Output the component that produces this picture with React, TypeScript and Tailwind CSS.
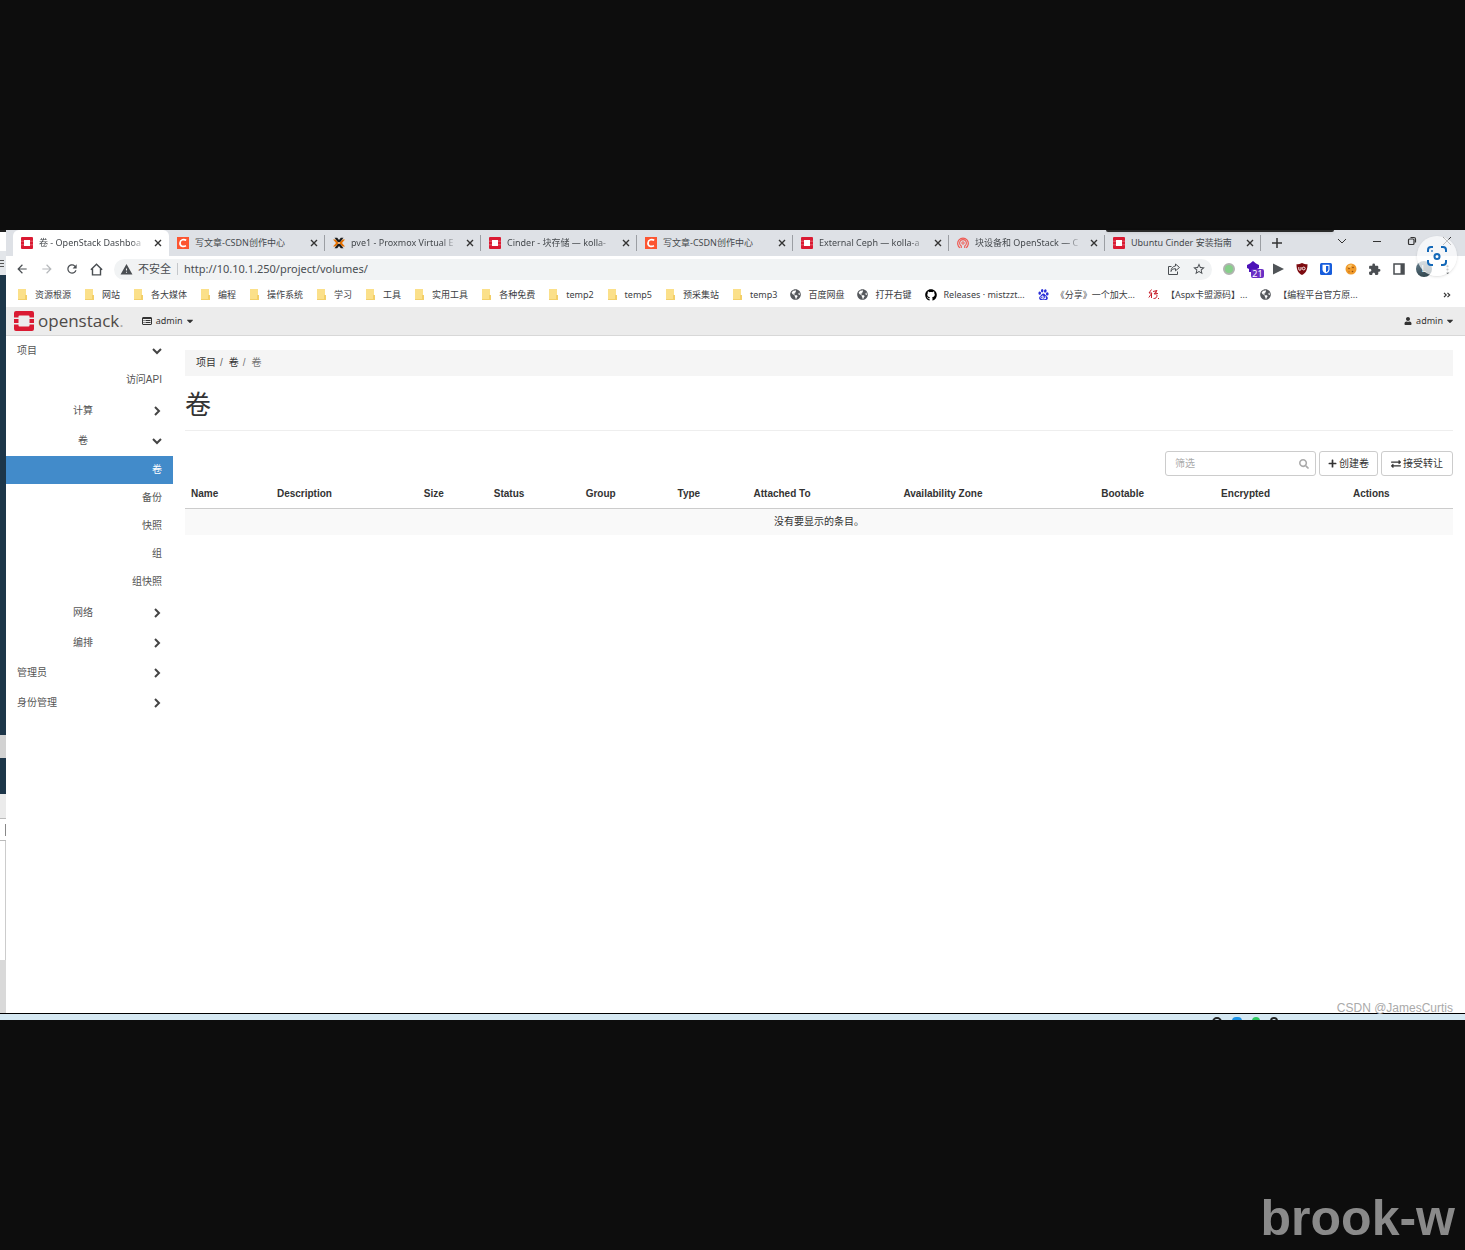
import React from "react";
import {
  MdArrowBack,
  MdArrowForward,
  MdExtension,
  MdMoreVert,
  MdRefresh,
  MdStarBorder,
  MdWarning,
} from "react-icons/md";
import {
  FaCaretDown,
  FaExchangeAlt,
  FaGithub,
  FaGlobeAmericas,
  FaPlus,
  FaSearch,
  FaUser,
} from "react-icons/fa";
import { SiBaidu } from "react-icons/si";

type IconKind = "openstack" | "csdn" | "proxmox" | "ceph";
type BookmarkKind = "folder" | "globe" | "github" | "baidu" | "red";

const tabs: { icon: IconKind; title: string; active?: boolean; long?: boolean }[] = [
  { icon: "openstack", title: "卷 - OpenStack Dashboa", active: true, long: true },
  { icon: "csdn", title: "写文章-CSDN创作中心" },
  { icon: "proxmox", title: "pve1 - Proxmox Virtual E", long: true },
  { icon: "openstack", title: "Cinder - 块存储 — kolla-", long: true },
  { icon: "csdn", title: "写文章-CSDN创作中心" },
  { icon: "openstack", title: "External Ceph — kolla-a", long: true },
  { icon: "ceph", title: "块设备和 OpenStack — C", long: true },
  { icon: "openstack", title: "Ubuntu Cinder 安装指南" },
];

const bookmarks: { kind: BookmarkKind; label: string }[] = [
  { kind: "folder", label: "资源根源" },
  { kind: "folder", label: "网站" },
  { kind: "folder", label: "各大媒体" },
  { kind: "folder", label: "编程" },
  { kind: "folder", label: "操作系统" },
  { kind: "folder", label: "学习" },
  { kind: "folder", label: "工具" },
  { kind: "folder", label: "实用工具" },
  { kind: "folder", label: "各种免费" },
  { kind: "folder", label: "temp2" },
  { kind: "folder", label: "temp5" },
  { kind: "folder", label: "预采集站" },
  { kind: "folder", label: "temp3" },
  { kind: "globe", label: "百度网盘" },
  { kind: "globe", label: "打开右键" },
  { kind: "github", label: "Releases · mistzzt..." },
  { kind: "baidu", label: "《分享》一个加大..." },
  { kind: "red", label: "【Aspx卡盟源码】..." },
  { kind: "globe", label: "【编程平台官方原..." },
];

const columns = [
  { label: "Name", width: "w-[86px]" },
  { label: "Description", width: "w-[147px]" },
  { label: "Size", width: "w-[70px]" },
  { label: "Status", width: "w-[92px]" },
  { label: "Group", width: "w-[92px]" },
  { label: "Type", width: "w-[76px]" },
  { label: "Attached To", width: "w-[150px]" },
  { label: "Availability Zone", width: "w-[198px]" },
  { label: "Bootable", width: "w-[120px]" },
  { label: "Encrypted", width: "w-[132px]" },
  { label: "Actions", width: "w-[106px]" },
];

function OpenStackMark({ className }: { className: string }) {
  return (
    <svg viewBox="0 0 20 20" className={className} aria-hidden="true">
      <path
        fill="#da1a32"
        d="M2 0h16a2 2 0 0 1 2 2v4.500h-4.500V5.500a1 1 0 0 0-1-1h-9a1 1 0 0 0-1 1v1H0V2a2 2 0 0 1 2-2ZM0 8h4.500v4H0ZM15.500 8H20v4h-4.500ZM0 13.500h4.500v1a1 1 0 0 0 1 1h9a1 1 0 0 0 1-1v-1H20V18a2 2 0 0 1-2 2H2a2 2 0 0 1-2-2Z"
      />
    </svg>
  );
}

function TabIcon({ kind }: { kind: IconKind }) {
  if (kind === "openstack") {
    return (
      <svg viewBox="0 0 12 12" className="size-3 shrink-0" aria-hidden="true">
        <rect width="12" height="12" rx="1" fill="#da1a32" />
        <rect x="3" y="3" width="6" height="6" fill="#fff" />
        <path stroke="#fff" strokeWidth=".5" opacity=".6" d="M0 4.200h3M0 7.800h3M9 4.200h3M9 7.800h3" />
      </svg>
    );
  }
  if (kind === "csdn") {
    return (
      <svg viewBox="0 0 12 12" className="size-3 shrink-0" aria-hidden="true">
        <rect width="12" height="12" fill="#fc5531" />
        <path fill="none" stroke="#fff" strokeWidth="1.700" d="M9.200 3.300C7 2 3.200 2.400 3 6S6.500 10 9 8.800" />
      </svg>
    );
  }
  if (kind === "proxmox") {
    return (
      <svg viewBox="0 0 12 12" className="size-3 shrink-0" aria-hidden="true">
        <path fill="#e57000" d="M0 2.500h2.500L6 6 2.500 9.500H0L3 6ZM12 2.500H9.500L6 6l3.500 3.500H12L9 6Z" />
        <path fill="#1b1b1b" d="M1.500.800h2.700L6 3 7.800.800h2.700L7.200 5h-2.400ZM1.500 11.200h2.700L6 9l1.800 2.200h2.700L7.200 7h-2.400Z" />
      </svg>
    );
  }
  return (
    <svg viewBox="0 0 12 12" className="size-3 shrink-0" fill="none" stroke="#ef5c55" aria-hidden="true">
      <path strokeWidth="1.200" d="M3 10.800A5.300 5.300 0 1 1 9 10.800" />
      <path strokeWidth="1.100" d="M4.300 11V9A3.400 3.400 0 1 1 7.700 9v2" />
      <circle cx="6" cy="6" r="1.200" strokeWidth="1" />
    </svg>
  );
}

function BookmarkIcon({ kind }: { kind: BookmarkKind }) {
  if (kind === "globe") return <FaGlobeAmericas className="size-[11px] shrink-0 text-[#55585c]" />;
  if (kind === "github") return <FaGithub className="size-3 shrink-0 text-black" />;
  if (kind === "baidu") return <SiBaidu className="size-[11px] shrink-0 text-[#2a2fd8]" />;
  if (kind === "red") {
    return (
      <svg viewBox="0 0 11 11" className="size-[11px] shrink-0" fill="none" stroke="#c8202c" aria-hidden="true">
        <path d="M3.500.500 1 4h3L.800 8.500M3.500 5v4M5 2.500l4-1L6 5l4-.500M8 2v3.500M9 6c0 3-1.500 3.500-3.500 3.500M10 9.500h1" />
      </svg>
    );
  }
  return (
    <svg viewBox="0 0 11 11" className="size-[11px] shrink-0" aria-hidden="true">
      <path fill="#fbe08a" d="M1 0h8v11H1z" />
      <path fill="#f3cf68" d="M8 6h2v5H1v-1h7z" />
    </svg>
  );
}

function BackgroundStrip() {
  return (
    <div className="flex w-1.5 shrink-0 flex-col overflow-hidden bg-white" aria-hidden="true">
      <div className="h-[21px] shrink-0 border-t-2 border-[#222]" />
      <div className="flex h-6 shrink-0 flex-col justify-center gap-0.5 bg-[#e3e6ea] pr-0.5">
        <div className="h-px bg-[#555]" />
        <div className="h-px bg-[#555]" />
        <div className="h-px bg-[#555]" />
      </div>
      <div className="h-[460px] shrink-0 bg-[#1d3649]" />
      <div className="h-[23px] shrink-0 bg-[#d2d2d2]" />
      <div className="h-9 shrink-0 bg-[#1d3649]" />
      <div className="h-[25px] shrink-0 border-b border-[#bbb] bg-[#ebebeb]" />
      <div className="flex h-[22px] shrink-0 items-center justify-end border-b border-[#bbb]">
        <div className="h-3 w-px bg-[#888]" />
      </div>
      <div className="h-[119px] shrink-0 border-r border-[#ccc]" />
      <div className="flex-1 bg-[#d9d9d9]" />
    </div>
  );
}

function TabStrip() {
  return (
    <div className="relative flex h-[26px] bg-[#dee1e6] pl-[7px] text-[#45494d]">
      {tabs.map((tab, i) => (
        <div
          key={i}
          className={
            tab.active
              ? "flex max-w-[156px] min-w-0 flex-1 items-center rounded-t-md bg-white pl-2"
              : "flex max-w-[156px] min-w-0 flex-1 items-center pl-2"
          }
        >
          <TabIcon kind={tab.icon} />
          <a
            href="#"
            className={
              tab.long
                ? "ml-1.5 min-w-0 flex-1 overflow-hidden mask-r-from-85% text-[9px] leading-4 whitespace-nowrap"
                : "ml-1.5 min-w-0 flex-1 overflow-hidden text-[9px] leading-4 whitespace-nowrap"
            }
          >
            {tab.title}
          </a>
          <button aria-label="关闭标签页" className="ml-1.5 flex h-4 w-3 items-center justify-center">
            <svg viewBox="0 0 8 8" className="size-2" stroke="#333" strokeWidth="1.400" aria-hidden="true">
              <path d="m1 1 6 6M7 1 1 7" />
            </svg>
          </button>
          <div className={tab.active ? "ml-1 w-px" : "ml-1 h-4 w-px bg-[#9b9ea3]"} />
        </div>
      ))}
      <button aria-label="新标签页" className="flex w-8 items-center justify-center">
        <svg viewBox="0 0 10 10" className="size-2.5" stroke="#333" strokeWidth="1.500" aria-hidden="true">
          <path d="M5 0v10M0 5h10" />
        </svg>
      </button>
      <div className="ml-auto flex items-start gap-[23px] pt-[5px] pr-3 text-[#333]">
        <button aria-label="搜索标签页" className="flex h-3 w-3 items-center justify-center">
          <svg viewBox="0 0 10 10" className="size-2.5" fill="none" stroke="currentColor" aria-hidden="true">
            <path d="m1 3 4 4 4-4" />
          </svg>
        </button>
        <button aria-label="最小化" className="flex h-3 w-3 items-center justify-center">
          <svg viewBox="0 0 10 10" className="size-2.5" fill="none" stroke="currentColor" aria-hidden="true">
            <path d="M1 5.500h8" />
          </svg>
        </button>
        <button aria-label="还原" className="flex h-3 w-3 items-center justify-center">
          <svg viewBox="0 0 10 10" className="size-2.5" fill="none" stroke="currentColor" strokeWidth="1.200" aria-hidden="true">
            <rect x="1.500" y="3" width="5.500" height="5.500" rx="1" />
            <path d="M3.500 1.500h3.500a1.500 1.500 0 0 1 1.500 1.500v3.500" />
          </svg>
        </button>
        <button aria-label="关闭" className="flex h-3 w-3 items-center justify-center">
          <svg viewBox="0 0 10 10" className="size-2.5" fill="none" stroke="currentColor" aria-hidden="true">
            <path d="m1 1 8 8M9 1 1 9" />
          </svg>
        </button>
      </div>
      <div className="absolute top-0 right-[131px] h-0.5 w-[228px] rounded-b bg-[#2a2a2a] shadow-sm" />
      <div className="absolute top-1.5 right-2 z-10 flex size-10 items-center justify-center rounded-full bg-white/70 shadow-sm">
        <svg viewBox="0 0 20 20" className="size-5" fill="none" stroke="#1368b8" strokeWidth="2" aria-label="以图搜图">
          <path d="M1 6V4a3 3 0 0 1 3-3h2M14 1h2a3 3 0 0 1 3 3v2M19 14v2a3 3 0 0 1-3 3h-2M6 19H4a3 3 0 0 1-3-3v-2" />
          <circle cx="10" cy="10.500" r="2.500" />
          <circle cx="5" cy="5" r=".5" strokeWidth="1" />
        </svg>
      </div>
    </div>
  );
}

function AddressBar() {
  return (
    <div className="flex h-[26px] items-center bg-white pr-[5px] pl-[9px] text-[#4a4e52]">
      <div className="flex items-center gap-[11px]">
        <button aria-label="后退">
          <MdArrowBack className="size-3.5" />
        </button>
        <button aria-label="前进" className="text-[#b5b8bb]">
          <MdArrowForward className="size-3.5" />
        </button>
        <button aria-label="重新加载">
          <MdRefresh className="size-3.5" />
        </button>
        <button aria-label="主页">
          <svg viewBox="0 0 12 12" className="size-[13px]" fill="none" stroke="currentColor" strokeWidth="1.300" aria-hidden="true">
            <path d="M.800 6.300 6 1.200l5.200 5.100M2.300 5.200v5.800h7.400V5.200" />
          </svg>
        </button>
      </div>
      <div className="ml-[11px] flex h-[21px] flex-1 items-center rounded-full bg-[#f1f3f4] px-1.5">
        <MdWarning className="size-[13px] shrink-0" />
        <label htmlFor="url" className="ml-[5px] border-r border-[#c4c7ca] pr-1.5 text-[11px] leading-3 whitespace-nowrap">
          不安全
        </label>
        <input
          id="url"
          defaultValue="http://10.10.1.250/project/volumes/"
          className="ml-1.5 min-w-0 flex-1 bg-transparent text-[11px] leading-4 outline-none"
        />
        <button aria-label="共享" className="mr-3">
          <svg viewBox="0 0 12 12" className="size-3" fill="none" stroke="currentColor" aria-hidden="true">
            <path d="M3.500 3.500h-3v8h9V8.500M7.500 1l4 3.500-4 3.300V5.700C5.200 5.700 3.700 6.500 3 8.500c0-3 1.800-5.300 4.500-5.500Z" />
          </svg>
        </button>
        <button aria-label="为此标签页添加书签">
          <MdStarBorder className="size-[14px]" />
        </button>
      </div>
      <div className="ml-[5px] flex w-[243px] items-center justify-between">
        <button aria-label="扩展程序 1" className="flex w-6 justify-center">
          <span className="size-3 rounded-full border-2 border-[#b0b4b0] bg-[#86cf8a]" />
        </button>
        <button aria-label="扩展程序 2" className="relative flex h-4 w-6 justify-center">
          <svg viewBox="0 0 12 12" className="size-3" fill="#4c12b8" aria-hidden="true">
            <path d="M6 0 9 2.500 12 4v3l-2 1v3H2V8L0 7V4l3-1.500Z" />
          </svg>
          <span className="absolute top-2 left-2.5 rounded-xs bg-[#6a2fc4] px-px text-[9px] leading-[9px] text-white">21</span>
        </button>
        <button aria-label="扩展程序 3" className="flex w-6 justify-center">
          <svg viewBox="0 0 12 12" className="size-3" fill="#505458" aria-hidden="true">
            <path d="M1 .500 12 6 1 11.500Z" />
          </svg>
        </button>
        <button aria-label="uBlock" className="flex w-6 justify-center">
          <svg viewBox="0 0 12 12" className="size-3" aria-hidden="true">
            <path fill="#7d0b10" d="M6 0c1.500 1 3.500 1.300 5.500 1.300C11.500 7 10 10 6 12 2 10 .500 7 .500 1.300 2.500 1.300 4.500 1 6 0Z" />
            <path fill="none" stroke="#fff" strokeWidth=".9" d="M2.800 4v2.200a1 1 0 0 0 2.200 0V4" />
            <circle cx="7.700" cy="5.500" r="1.400" fill="none" stroke="#fff" strokeWidth=".9" />
          </svg>
        </button>
        <button aria-label="Bitwarden" className="flex w-6 justify-center">
          <svg viewBox="0 0 12 12" className="size-3" aria-hidden="true">
            <rect width="12" height="12" rx="1.500" fill="#175ddc" />
            <path fill="#fff" d="M2.500 1.800h7v4.500C9.500 8.500 8 9.700 6 10.600 4 9.700 2.500 8.500 2.500 6.300Z" />
            <path fill="#175ddc" d="M6 2.900h2.400v3.400C8.400 7.600 7.500 8.500 6 9.300Z" />
          </svg>
        </button>
        <button aria-label="Cookie" className="flex w-6 justify-center">
          <svg viewBox="0 0 12 12" className="size-3" aria-hidden="true">
            <circle cx="6" cy="6" r="5.500" fill="#f09a2a" />
            <path fill="#f7c46a" d="M2.500 3.500a4 4 0 0 1 5-1.700L5 5Z" />
            <g fill="#8d4a12">
              <circle cx="4" cy="5.500" r=".8" />
              <circle cx="8" cy="4.500" r=".8" />
              <circle cx="7.500" cy="8.500" r=".8" />
              <circle cx="4" cy="8.800" r=".5" />
            </g>
          </svg>
        </button>
        <button aria-label="扩展程序" className="flex w-6 justify-center">
          <MdExtension className="size-[13px]" />
        </button>
        <button aria-label="侧边栏" className="flex w-6 justify-center">
          <svg viewBox="0 0 12 12" className="size-3" aria-hidden="true">
            <rect x="1" y="1" width="10" height="10" fill="none" stroke="currentColor" strokeWidth="1.500" />
            <path fill="currentColor" d="M7.500 1H11v10H7.500z" />
          </svg>
        </button>
        <button aria-label="个人资料" className="flex w-6 justify-center">
          <span className="flex size-4 items-center justify-center rounded-full bg-linear-to-b from-[#6b8696] to-[#33474f] text-[8px] leading-none text-white">
            L
          </span>
        </button>
        <button aria-label="更多" className="flex w-6 justify-center">
          <MdMoreVert className="size-[13px]" />
        </button>
      </div>
    </div>
  );
}

function BookmarkBar() {
  return (
    <nav aria-label="书签" className="flex h-[25px] items-center gap-[13px] bg-white pr-3.5 pl-[11px] text-[9px] leading-4 text-[#3c4043]">
      {bookmarks.map((b) => (
        <a key={b.label} href="#" className="flex items-center gap-[7px] whitespace-nowrap">
          <BookmarkIcon kind={b.kind} />
          {b.label}
        </a>
      ))}
      <button aria-label="更多书签" className="ml-auto">
        <svg viewBox="0 0 8 6" className="h-1.5 w-2" fill="none" stroke="#333" strokeWidth="1.200" aria-hidden="true">
          <path d="m1 .800 2.200 2.200L1 5.200M4.500.800 6.700 3 4.500 5.200" />
        </svg>
      </button>
    </nav>
  );
}

function SiteHeader() {
  return (
    <header className="flex h-[29px] items-center border-b border-[#d8d8d8] bg-[#ececec] pr-2.5 pl-2 text-[9px] text-[#333]">
      <a href="#" className="flex items-center gap-1">
        <OpenStackMark className="size-5" />
        <span className="font-['Open_Sans',sans-serif] text-[17px] leading-6 font-medium text-[#4f4a48]">
          openstack<span className="text-[#aaa]">.</span>
        </span>
      </a>
      <button className="ml-[18px] flex items-center gap-1">
        <svg viewBox="0 0 10 8" className="h-2 w-2.5" fill="none" stroke="currentColor" aria-hidden="true">
          <rect x=".5" y=".5" width="9" height="7" rx=".5" />
          <path d="M.500 1.500h9M1.500 3.500h1M3.500 3.500h5M1.500 5.500h1M3.500 5.500h5" />
        </svg>
        <span className="leading-4">admin</span>
        <FaCaretDown className="-ml-0.5 size-2.5" />
      </button>
      <button className="ml-auto flex items-center gap-1">
        <FaUser className="size-2" />
        <span className="leading-4">admin</span>
        <FaCaretDown className="-ml-0.5 size-2.5" />
      </button>
    </header>
  );
}

function Chevron({ open }: { open?: boolean }) {
  return (
    <svg viewBox="0 0 10 10" className="size-2.5" fill="none" stroke="#444" strokeWidth="2" aria-hidden="true">
      <path d={open ? "M1 3l4 4 4-4" : "M3 1l4 4-4 4"} />
    </svg>
  );
}

function TopGroup({ label, open }: { label: string; open?: boolean }) {
  return (
    <button aria-expanded={!!open} className="flex h-[30px] w-full items-center justify-between pr-[11px] pl-[11px]">
      {label}
      <Chevron open={open} />
    </button>
  );
}

function SubGroup({ label, open }: { label: string; open?: boolean }) {
  return (
    <button aria-expanded={!!open} className="grid h-[30px] w-full grid-cols-[1fr_10px] items-center pr-[11px] text-center">
      <span className="pl-2">{label}</span>
      <Chevron open={open} />
    </button>
  );
}

function Leaf({ label, active }: { label: string; active?: boolean }) {
  return (
    <a
      href="#"
      className={
        active
          ? "flex h-7 items-center justify-end bg-[#428bca] pr-[11px] text-white"
          : "flex h-7 items-center justify-end pr-[11px]"
      }
    >
      {label}
    </a>
  );
}

function Sidebar() {
  return (
    <nav aria-label="导航" className="w-[167px] shrink-0 text-[10px] leading-4 text-[#555]">
      <TopGroup label="项目" open />
      <div className="pb-0.5">
        <Leaf label="访问API" />
      </div>
      <SubGroup label="计算" />
      <SubGroup label="卷" open />
      <div className="pb-0.5">
        <Leaf label="卷" active />
        <Leaf label="备份" />
        <Leaf label="快照" />
        <Leaf label="组" />
        <Leaf label="组快照" />
      </div>
      <SubGroup label="网络" />
      <SubGroup label="编排" />
      <TopGroup label="管理员" />
      <TopGroup label="身份管理" />
    </nav>
  );
}

function VolumesPage() {
  return (
    <main className="min-w-0 flex-1 pt-3.5 pr-3 pl-3 text-[10px] leading-4 text-[#333]">
      <ol className="flex h-[26px] items-center gap-1 bg-[#f5f5f5] px-[11px]">
        <li>
          <a href="#">项目</a>
        </li>
        <li className="flex gap-1.5">
          <span className="text-[#666]">/</span>
          <a href="#">卷</a>
        </li>
        <li className="flex gap-1.5 text-[#777]">
          <span>/</span>卷
        </li>
      </ol>
      <h1 className="mt-3 border-b border-[#eee] pb-2 text-[26px] leading-[34px]">卷</h1>
      <div className="mt-5 flex justify-end gap-[3px]">
        <div className="flex h-[25px] w-[151px] items-center rounded-[3px] border border-[#ccc] pr-1.5 pl-[9px]">
          <input aria-label="筛选" placeholder="筛选" className="min-w-0 flex-1 outline-none placeholder:text-[#aaa]" />
          <FaSearch className="size-2.5 text-[#aaa]" />
        </div>
        <button className="flex h-[25px] items-center gap-0.5 rounded-[3px] border border-[#ccc] px-2">
          <FaPlus className="size-[9px]" />
          创建卷
        </button>
        <button className="flex h-[25px] items-center gap-0.5 rounded-[3px] border border-[#ccc] px-[9px]">
          <FaExchangeAlt className="size-2.5" />
          接受转让
        </button>
      </div>
      <table className="mt-1 w-full border-collapse text-left">
        <thead className="border-b border-[#ccc]">
          <tr className="h-7">
            {columns.map((c) => (
              <th key={c.label} scope="col" className={`${c.width} pl-1.5 font-bold whitespace-nowrap`}>
                {c.label}
              </th>
            ))}
          </tr>
        </thead>
        <tbody>
          <tr className="h-[27px] bg-[#f9f9f9]">
            <td colSpan={columns.length} className="text-center">
              没有要显示的条目。
            </td>
          </tr>
        </tbody>
      </table>
    </main>
  );
}

function Taskbar() {
  return (
    <div className="flex h-[7px] justify-end gap-2.5 overflow-hidden border-t border-black bg-[#d5e8f2] pt-[3px] pr-[187px]" aria-hidden="true">
      <div className="size-2.5 shrink-0 rounded-full border-2 border-[#222]" />
      <div className="h-2 w-2.5 shrink-0 rounded-sm bg-[#1c93e8]" />
      <div className="h-2 w-2 shrink-0 rounded-full bg-[#2fc860]" />
      <div className="size-2 shrink-0 rounded-full border-2 border-[#222]" />
    </div>
  );
}

export default function App() {
  return (
    <div className="flex min-h-screen flex-col bg-[#0d0d0d] pt-[230px]">
      <div className="flex">
        <BackgroundStrip />
        <div className="relative flex min-h-[783px] min-w-0 flex-1 flex-col bg-white font-['Noto_Sans','Noto_Sans_CJK_SC',sans-serif]">
          <TabStrip />
          <AddressBar />
          <BookmarkBar />
          <SiteHeader />
          <div className="flex flex-1 font-['Liberation_Sans','Noto_Sans_CJK_SC',sans-serif]">
            <Sidebar />
            <VolumesPage />
          </div>
          <p className="absolute right-3 bottom-0 font-['Liberation_Sans',sans-serif] text-[12px] leading-[10px] text-[#aaa]">
            CSDN @JamesCurtis
          </p>
        </div>
      </div>
      <Taskbar />
      <p className="mt-auto pr-2.5 pb-1 text-right font-['Liberation_Sans',sans-serif] text-[50px] leading-[56px] font-bold text-[#8a8a8a]">
        brook-w
      </p>
    </div>
  );
}
